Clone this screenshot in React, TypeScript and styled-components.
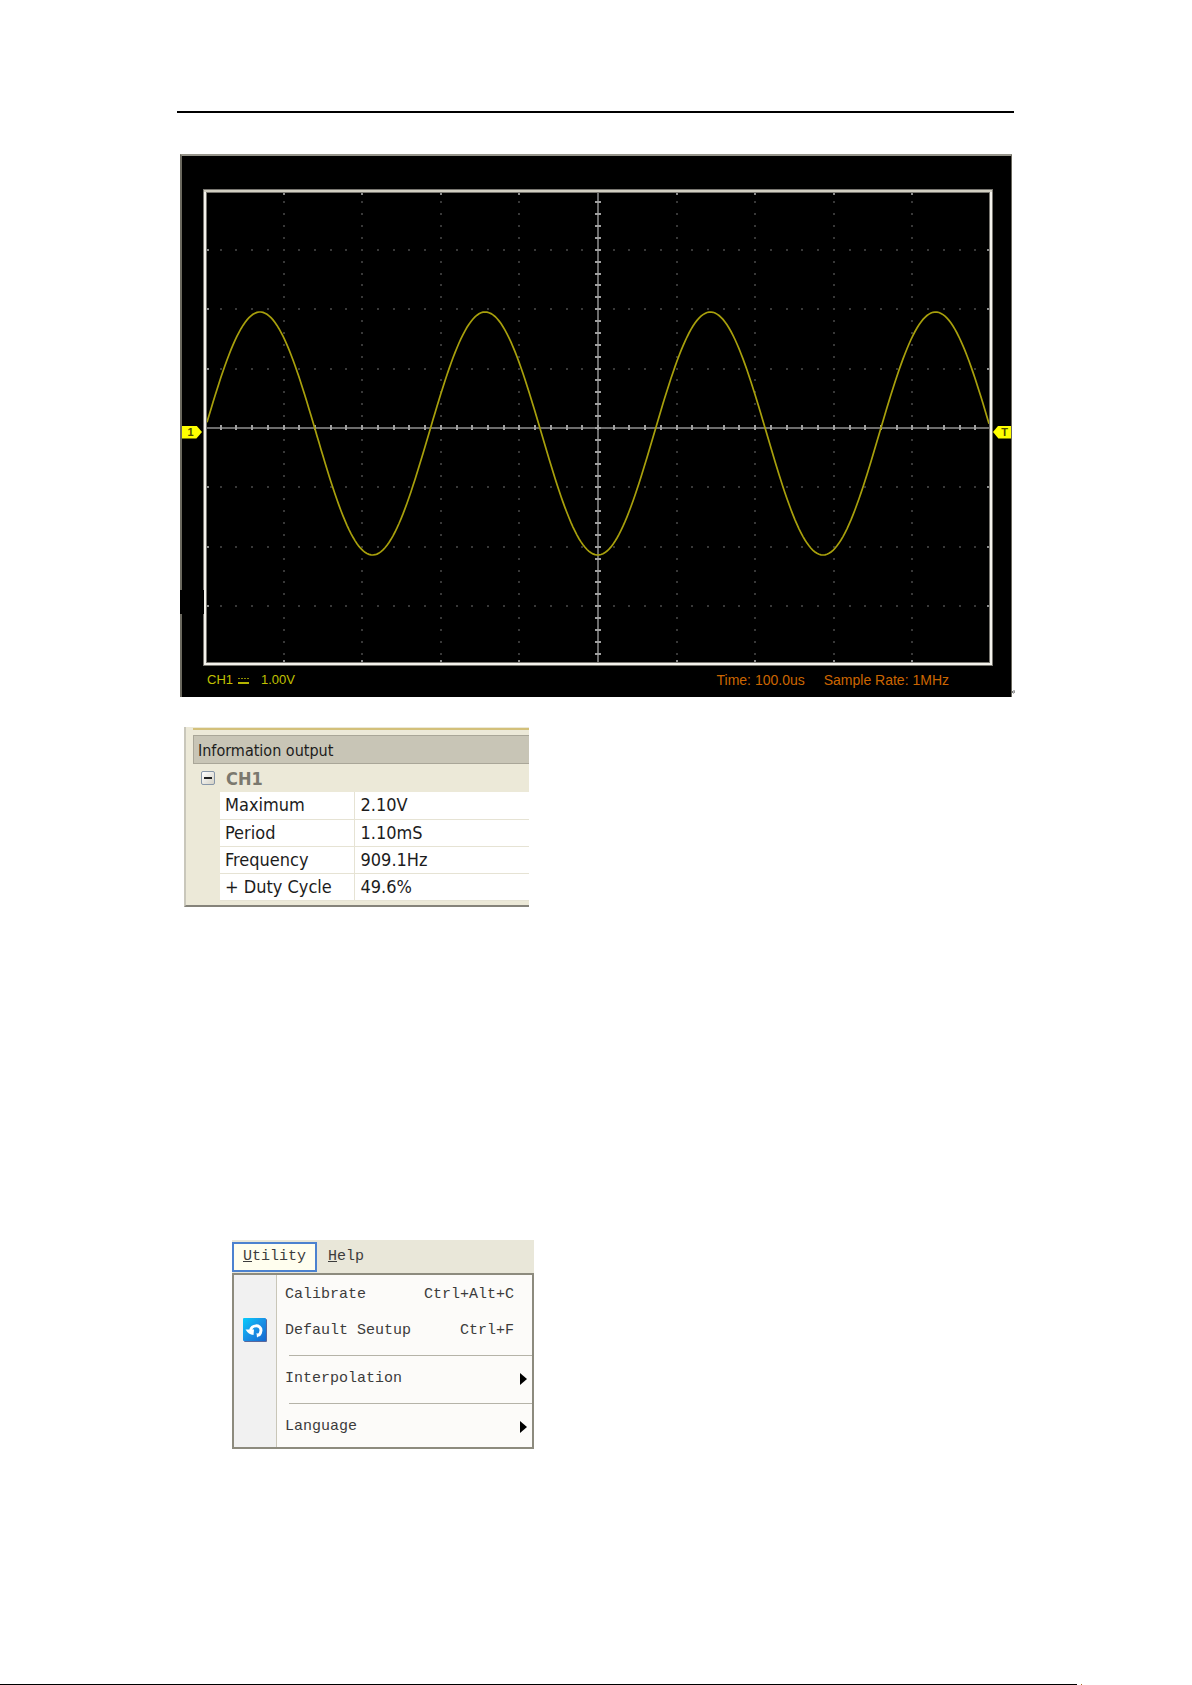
import React from 'react';
import styled, { createGlobalStyle } from 'styled-components';

const GlobalStyle = createGlobalStyle`
  *, *::before, *::after { box-sizing: border-box; }
  body { margin: 0; background: #fff; }
`;

const tahoma = `'DejaVu Sans Condensed', 'DejaVu Sans', sans-serif`;
const arial = `'Liberation Sans', Arial, sans-serif`;
const mono = `'Liberation Mono', 'Courier New', monospace`;

const Page = styled.div`
  display: flex;
  flex-direction: column;
  min-height: 100vh;
`;

const Content = styled.main`
  display: flex;
  flex-direction: column;
  padding: 111px 178px 0 177px;
`;

const HeaderRule = styled.hr`
  width: 100%;
  margin: 0 0 41px;
  border: 0;
  border-top: 2px solid #000;
`;

const FooterRule = styled.div`
  display: flex;
  gap: 4px;
  margin-top: auto;
  padding-right: 110px;
  height: 1px;
  &::before { content: ''; flex: 1; background: #000; }
  &::after { content: ''; width: 1px; background: #a86a20; }
`;

/* ---------- oscilloscope ---------- */

const Scope = styled.section`
  position: relative;
  display: grid;
  grid-template-columns: 21px 1fr 18px;
  margin: 0 2px 0 3px;
  padding-top: 33px;
  background: #000;
  border: solid #6a685e;
  border-width: 2px 1px 0 2px;
  border-top-color: #96948a;
  font-family: ${arial};
`;

const Side = styled.div`
  display: flex;
  align-items: center;
  justify-content: flex-start;
  padding-top: 9px;
`;

const RightSide = styled(Side)`
  justify-content: flex-end;
`;

const Marker = styled.span<{ $point: 'left' | 'right' }>`
  width: ${p => (p.$point === 'right' ? 20 : 18)}px;
  height: 13px;
  background: #ffff00;
  color: #4c4c00;
  font-size: 11px;
  font-weight: 700;
  line-height: 13px;
  text-align: center;
  padding: ${p => (p.$point === 'right' ? '0 3px 0 0' : '0 0 0 5px')};
  clip-path: ${p =>
    p.$point === 'right'
      ? 'polygon(0 0, 72% 0, 100% 50%, 72% 100%, 0 100%)'
      : 'polygon(30% 0, 100% 0, 100% 100%, 30% 100%, 0 50%)'};
`;

const Plot = styled.svg`
  display: block;
  width: 100%;
  height: auto;
`;

const Notch = styled.span`
  position: absolute;
  left: -2px;
  bottom: 83px;
  width: 24px;
  height: 24px;
  background: #000;
`;

const ReturnMark = styled.svg`
  position: absolute;
  right: -4px;
  bottom: 2px;
  width: 4px;
  height: 6px;
`;

const Status = styled.div`
  grid-column: 2;
  display: flex;
  align-items: center;
  height: 31px;
  padding: 0 44px 4px 4px;
  line-height: 16px;
  white-space: nowrap;
`;

const Channel = styled.span`
  display: flex;
  align-items: center;
  margin-right: auto;
  color: #c0c000;
  font-size: 13px;
`;

const Coupling = styled.svg`
  width: 13px;
  height: 8px;
  margin: 2px 11px 0 4px;
`;

const Timing = styled.span`
  margin-left: 19px;
  color: #cc6600;
  font-size: 14px;
`;

const W = 790;
const H = 477;
const CX = 395;
const CY = 239;
const STEP_X = 78.6;
const STEP_Y = 59.4;

const wave = Array.from({ length: 392 }, (_, i) => {
  const x = 4 + i * 2;
  const y = 244.5 - 121.5 * Math.cos(((x - 57) / 225.2) * Math.PI * 2);
  return `${x},${y.toFixed(1)}`;
}).join(' ');

const range = (n: number) => Array.from({ length: 2 * n + 1 }, (_, i) => i - n);

function Graticule() {
  return (
    <g shapeRendering="crispEdges">
      <g fill="#383838">
        {range(4).filter(c => c !== 0).map(c =>
          range(19).map(r => (
            <rect key={`v${c}_${r}`} x={Math.round(CX + c * STEP_X) - 1} y={Math.round(CY + (r * STEP_Y) / 5) - 1} width="2" height="2" />
          )),
        )}
        {range(3).filter(r => r !== 0).map(r =>
          range(24).map(c => (
            <rect key={`h${c}_${r}`} x={Math.round(CX + (c * STEP_X) / 5) - 1} y={Math.round(CY + r * STEP_Y) - 1} width="2" height="2" />
          )),
        )}
      </g>
      <g fill="#8a8a8a">
        {range(4).map(c => (
          <React.Fragment key={c}>
            <rect x={Math.round(CX + c * STEP_X) - 1} y="4" width="2" height="2" />
            <rect x={Math.round(CX + c * STEP_X) - 1} y={H - 6} width="2" height="2" />
          </React.Fragment>
        ))}
        {range(3).map(r => (
          <React.Fragment key={r}>
            <rect x="4" y={Math.round(CY + r * STEP_Y) - 1} width="2" height="2" />
            <rect x={W - 6} y={Math.round(CY + r * STEP_Y) - 1} width="2" height="2" />
          </React.Fragment>
        ))}
      </g>
      <rect x="4" y={CY - 1} width={W - 8} height="2" fill="#6c6c6c" />
      <rect x={CX - 1} y="4" width="2" height={H - 8} fill="#6c6c6c" />
      <g fill="#a0a0a0">
        {range(24).map(c => (
          <rect key={`x${c}`} x={Math.round(CX + (c * STEP_X) / 5) - 1} y={CY - 3} width="2" height="5" />
        ))}
        {range(19).map(r => (
          <rect key={`y${r}`} x={CX - 3} y={Math.round(CY + (r * STEP_Y) / 5) - 1} width="6" height="2" />
        ))}
      </g>
    </g>
  );
}

function Oscilloscope() {
  return (
    <Scope aria-label="Oscilloscope display">
      <Side><Marker $point="right">1</Marker></Side>
      <Plot viewBox={`0 0 ${W} ${H}`} role="img" aria-label="Channel 1 sine wave">
        <Graticule />
        <polyline points={wave} fill="none" stroke="#a8a00c" strokeWidth="1.7" />
        <rect x="2" y="2" width={W - 4} height={H - 4} fill="none" stroke="#77756f" strokeWidth="4" />
        <rect x="2" y="2" width={W - 4} height={H - 4} fill="none" stroke="#f4f2ec" strokeWidth="2" />
        <path d={`M1 2H${W - 1}`} stroke="#d2cfc2" strokeWidth="2" />
      </Plot>
      <RightSide><Marker $point="left">T</Marker></RightSide>
      <Status>
        <Channel>
          CH1
          <Coupling viewBox="0 0 13 8" shapeRendering="crispEdges">
            <path d="M1 1.500H13" stroke="#8c8c00" strokeDasharray="2 1" />
            <path d="M1 6H12" stroke="#b4b400" strokeWidth="2" />
          </Coupling>
          1.00V
        </Channel>
        <Timing>Time: 100.0us</Timing>
        <Timing>Sample Rate: 1MHz</Timing>
      </Status>
      <Notch />
      <ReturnMark viewBox="0 0 4 6">
        <path d="M4 1V4M4 3H1M2.5 1.5L1 3L2.5 4.5" fill="none" stroke="#777" />
      </ReturnMark>
    </Scope>
  );
}

/* ---------- measurement panel ---------- */

const Panel = styled.section`
  width: 345px;
  margin: 30px 0 0 7px;
  padding: 1px 0 4px 7px;
  background: #ece9d8;
  border-left: 2px solid #c9c7bb;
  border-bottom: 2px solid #85837a;
  font-family: ${tahoma};
  color: #1c1c1c;
`;

const PanelEdge = styled.div`
  height: 7px;
  border-top: 2px solid #d3c07a;
`;

const PanelTitle = styled.h2`
  margin: 0;
  height: 29px;
  padding-left: 4px;
  background: #c8c5b6;
  border: 1px solid #a9a698;
  border-right: 0;
  font-size: 16px;
  font-weight: 400;
  line-height: 30px;
`;

const Group = styled.div`
  display: flex;
  align-items: center;
  gap: 11px;
  height: 28px;
  padding-left: 8px;
  color: #7b796e;
  font-size: 18px;
  font-weight: 700;
`;

const Toggle = styled.button`
  display: flex;
  width: 14px;
  height: 14px;
  padding: 0;
  align-items: center;
  justify-content: center;
  background: linear-gradient(135deg, #fff, #d5d2c6);
  border: 1px solid #8796a8;
  border-radius: 2px;
  &::before { content: ''; width: 8px; height: 2px; background: #222; }
`;

const Measures = styled.table`
  width: calc(100% - 27px);
  margin-left: 27px;
  border-collapse: collapse;
  table-layout: fixed;
  background: #fff;
  font-size: 18px;
  line-height: 26px;
`;

const Label = styled.th`
  width: 134px;
  height: 27px;
  padding: 0 0 0 5px;
  border: solid #e6e3d4;
  border-width: 0 1px 1px 0;
  font-weight: 400;
  text-align: left;
  white-space: nowrap;
`;

const Value = styled.td`
  padding: 0 0 0 6px;
  border-bottom: 1px solid #e6e3d4;
`;

const measures = [
  ['Maximum', '2.10V'],
  ['Period', '1.10mS'],
  ['Frequency', '909.1Hz'],
  ['+ Duty Cycle', '49.6%'],
];

function InformationOutput() {
  return (
    <Panel>
      <PanelEdge />
      <PanelTitle>Information output</PanelTitle>
      <Group><Toggle aria-label="Collapse CH1" />CH1</Group>
      <Measures>
        <tbody>
          {measures.map(([name, value]) => (
            <tr key={name}>
              <Label scope="row">{name}</Label>
              <Value>{value}</Value>
            </tr>
          ))}
        </tbody>
      </Measures>
    </Panel>
  );
}

/* ---------- utility menu ---------- */

const MenuArea = styled.nav`
  width: 302px;
  margin: 333px 0 0 55px;
  font-family: ${mono};
  font-size: 15px;
`;

const MenuBar = styled.div`
  display: flex;
  height: 33px;
  padding: 2px 0 1px;
  background: #e9e7d9;
`;

const MenuTab = styled.button<{ $open?: boolean }>`
  width: 85px;
  padding: 0 0 0 9px;
  border: 2px solid ${p => (p.$open ? '#4c82cf' : 'transparent')};
  background: ${p => (p.$open ? '#fffeee' : 'transparent')};
  color: #3c3c3c;
  font: inherit;
  text-align: left;
`;

const Dropdown = styled.div`
  display: flex;
  flex-direction: column;
  padding: 2px 0;
  border: 2px solid #8d8b7e;
  background: linear-gradient(90deg, #f1f1f1 42px, #c9c6b8 42px, #c9c6b8 43px, #fcfbf9 43px);
`;

const Item = styled.button`
  display: grid;
  grid-template-columns: 51px 1fr auto;
  align-items: center;
  height: 36px;
  padding: 0 18px 0 0;
  border: 0;
  background: none;
  color: #3c3c3c;
  font: inherit;
  text-align: left;
`;

const SubmenuItem = styled(Item)`
  padding-right: 5px;
`;

const Separator = styled.hr`
  width: calc(100% - 55px);
  margin: 6px 0 5px 55px;
  border: 0;
  border-top: 1px solid #b5b3a8;
`;

const ItemIcon = styled.svg`
  width: 25px;
  height: 25px;
  margin-left: 9px;
`;

const Arrow = styled.svg`
  width: 7px;
  height: 12px;
`;

const SubmenuArrow = () => (
  <Arrow viewBox="0 0 7 12"><path d="M0 0L7 6L0 12Z" fill="#000" /></Arrow>
);

function UtilityMenu() {
  return (
    <MenuArea>
      <MenuBar>
        <MenuTab $open><u>U</u>tility</MenuTab>
        <MenuTab><u>H</u>elp</MenuTab>
      </MenuBar>
      <Dropdown>
        <Item><span /><span>Calibrate</span><span>Ctrl+Alt+C</span></Item>
        <Item>
          <ItemIcon viewBox="0 0 25 25">
            <defs>
              <linearGradient id="reset" x1="0" y1="0" x2="1" y2="1">
                <stop offset="0" stopColor="#06ccfc" />
                <stop offset="0.5" stopColor="#1a92e6" />
                <stop offset="1" stopColor="#1468d0" />
              </linearGradient>
            </defs>
            <rect x="1" y="1" width="23" height="23" rx="1" fill="#5a689c" />
            <rect x="0" y="0" width="23" height="23" rx="1" fill="url(#reset)" />
            <path d="M7.500 13C8 6.500 18 6 18 12.500C18 15 17 16 15.500 17.500" fill="none" stroke="#fff" strokeWidth="3" />
            <path d="M2.500 11.500L11 11.500L10.500 17Q5.500 16.500 2.500 11.500Z" fill="#fff" />
            <path d="M13.500 15L18 17L14 19.500Z" fill="#fff" />
          </ItemIcon>
          <span>Default Seutup</span>
          <span>Ctrl+F</span>
        </Item>
        <Separator />
        <SubmenuItem><span /><span>Interpolation</span><SubmenuArrow /></SubmenuItem>
        <Separator />
        <SubmenuItem><span /><span>Language</span><SubmenuArrow /></SubmenuItem>
      </Dropdown>
    </MenuArea>
  );
}

export default function App() {
  return (
    <Page>
      <GlobalStyle />
      <Content>
        <HeaderRule />
        <Oscilloscope />
        <InformationOutput />
        <UtilityMenu />
      </Content>
      <FooterRule />
    </Page>
  );
}
